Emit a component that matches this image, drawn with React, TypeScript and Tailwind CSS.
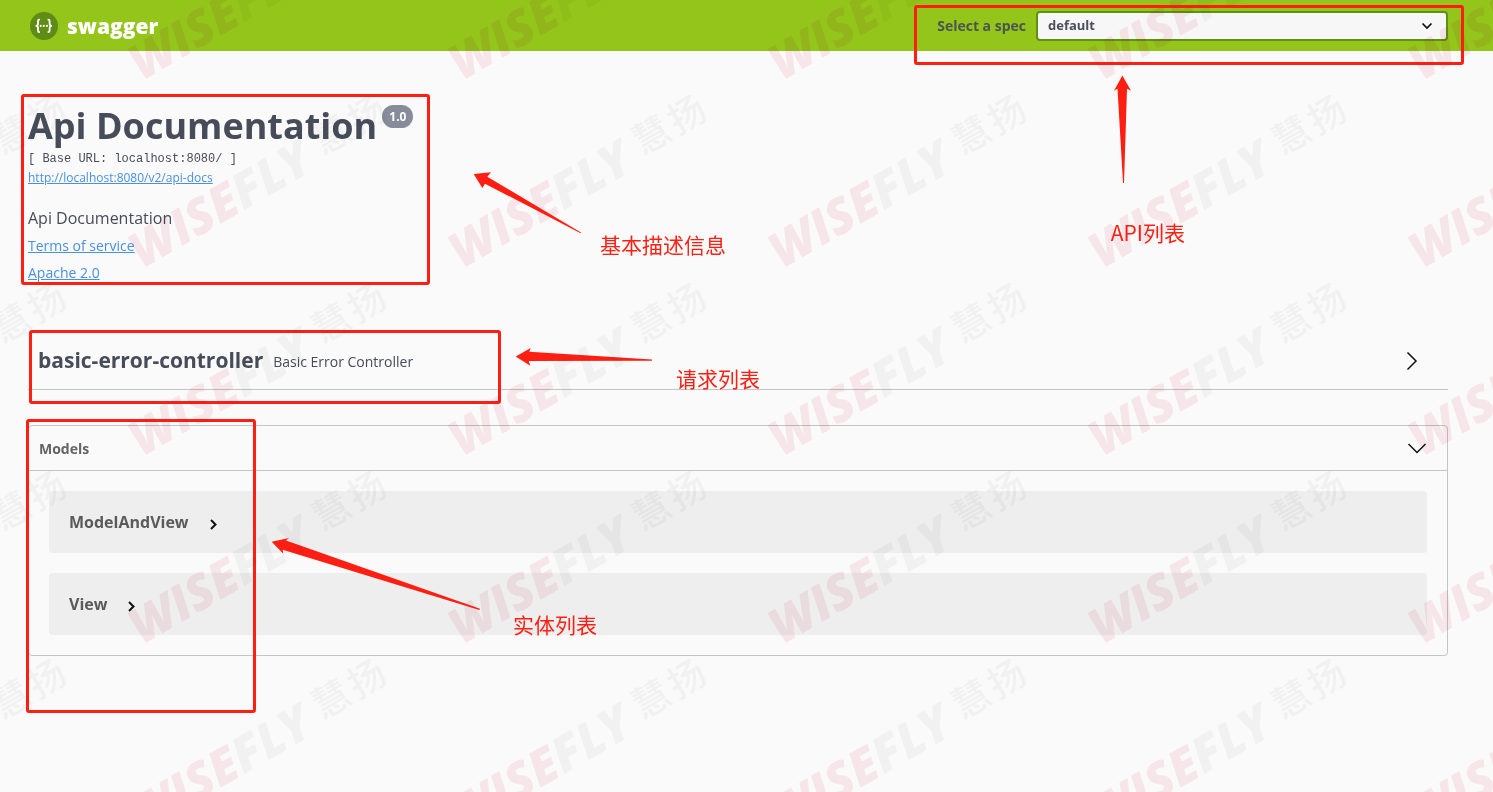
import React, { useState } from "react";

const HEADING = "font-['Open_Sans',sans-serif] font-bold";

function Chevron({ className, points, size, stroke }: { className?: string; points: string; size: number; stroke: number }) {
  return (
    <svg className={className} width={size} height={size} viewBox={`0 0 ${size} ${size}`} fill="none" stroke="#111" strokeWidth={stroke} aria-hidden="true">
      <polyline points={points} />
    </svg>
  );
}

function Logo() {
  return (
    <a href="#" className="flex items-center gap-[9px]">
      <svg width="29" height="29" viewBox="0 0 29 29" aria-hidden="true">
        <circle cx="15" cy="15" r="14" fill="#5f8c14" />
        <g fill="none" stroke="#fff" strokeWidth="1.8">
          <path d="M11 8.6H10.2Q9 8.6 9 9.9V12.7Q9 14.8 6.6 14.8Q9 14.8 9 16.9V19.8Q9 21.2 10.2 21.2H11" />
          <path d="M18.6 8.6H19.4Q20.6 8.6 20.6 9.9V12.7Q20.6 14.8 23 14.8Q20.6 14.8 20.6 16.9V19.8Q20.6 21.2 19.4 21.2H18.6" />
        </g>
        <g fill="#fff">
          <circle cx="11.7" cy="14.9" r="1.05" />
          <circle cx="14.8" cy="14.9" r="1.05" />
          <circle cx="17.9" cy="14.9" r="1.05" />
        </g>
      </svg>
      <span className="font-['Open_Sans',sans-serif] text-[21px] leading-7 font-extrabold text-white">swagger</span>
    </a>
  );
}

function TopBar() {
  return (
    <header className="flex h-[51px] items-center justify-between bg-[#93c51b] pr-[45px] pl-[29px]">
      <Logo />
      <div className="flex items-center gap-[10px]">
        <label htmlFor="spec" className={`${HEADING} text-sm text-[#4d5451]`}>
          Select a spec
        </label>
        <div className="relative">
          <select
            id="spec"
            className={`${HEADING} h-[30px] w-[412px] appearance-none rounded-[4px] border-2 border-[#628f16] bg-[#f7f7f7] px-[10px] text-[13px] text-[#4b4f5c]`}
          >
            <option>default</option>
          </select>
          <Chevron className="pointer-events-none absolute top-2 right-[14px]" size={14} stroke={1.7} points="2.5,4.5 7,9 11.5,4.5" />
        </div>
      </div>
    </header>
  );
}

function Info() {
  return (
    <section className="pt-[50px] text-[#474c5a]">
      <div className="flex items-start gap-[5px]">
        <h1 className="font-['Open_Sans',sans-serif] text-4xl leading-[49px] font-bold">Api Documentation</h1>
        <span className="mt-1 rounded-full bg-[#868c9a] px-[7px] text-xs leading-[23px] font-bold text-white">1.0</span>
      </div>
      <p className="font-['Liberation_Mono',monospace] text-xs leading-[18px]">[ Base URL: localhost:8080/ ]</p>
      <a href="#api-docs" className="block w-fit text-xs leading-5 text-[#4990e2] underline">
        http://localhost:8080/v2/api-docs
      </a>
      <p className="mt-[18px] text-base leading-6">Api Documentation</p>
      <a href="#terms" className="mt-0.5 block w-fit text-sm leading-[27px] text-[#4990e2] underline">
        Terms of service
      </a>
      <a href="#license" className="block w-fit text-sm leading-[27px] text-[#4990e2] underline">
        Apache 2.0
      </a>
    </section>
  );
}

function ControllerTag() {
  return (
    <section className="mt-[47px] flex h-[57px] items-center border-b border-[#c3c4c8] px-[10px] text-[#474c5a]">
      <h2 className={`${HEADING} text-[21px]`}>basic-error-controller</h2>
      <small className="ml-[10px] flex-1 pt-0.5 text-sm">Basic Error Controller</small>
      <button type="button" aria-label="Expand operations" className="mr-4">
        <Chevron size={20} stroke={1.5} points="5.5,1.5 14,10 5.5,18.5" />
      </button>
    </section>
  );
}

function Models() {
  const [open, setOpen] = useState(true);
  return (
    <section className="mt-[35px] rounded-[4px] border border-[#c3c4c8]">
      <h3 className="border-b border-[#c3c4c8]">
        <button
          type="button"
          onClick={() => setOpen(!open)}
          className={`${HEADING} flex h-11 w-full items-center justify-between pt-0.5 pr-5 pl-[10px] text-sm text-[#646468]`}
        >
          Models
          <Chevron size={20} stroke={1.5} points="1.5,5 10,13.5 18.5,5" />
        </button>
      </h3>
      {open && (
        <div className="flex flex-col gap-5 p-5">
          {["ModelAndView", "View"].map((name) => (
            <button key={name} type="button" className={`${HEADING} flex h-[62px] items-center gap-[18px] rounded-[4px] bg-[#eee] px-5 text-base text-[#5a5a5a]`}>
              {name}
              <Chevron className="mt-1" size={13} stroke={2} points="4,2 8.5,6.5 4,11" />
            </button>
          ))}
        </div>
      )}
    </section>
  );
}

function Box({ className }: { className: string }) {
  return <div className={`absolute rounded-[3px] border-3 border-[#ff1f12] ${className}`} />;
}

function Note({ className, children }: { className: string; children: React.ReactNode }) {
  return (
    <p className={`absolute font-['Noto_Sans_CJK_SC',sans-serif] text-[21px] leading-6 font-normal whitespace-nowrap text-[#ff1f12] ${className}`}>{children}</p>
  );
}

function Annotations() {
  return (
    <div className="pointer-events-none absolute inset-0">
      <Box className="top-[5px] right-[29px] h-[60px] w-[550px]" />
      <Box className="top-[94px] left-[21px] h-[191px] w-[409px]" />
      <Box className="top-[330px] left-[29px] h-[74px] w-[472px]" />
      <Box className="top-[419px] left-[26px] h-[294px] w-[230px]" />
      <svg className="absolute top-0 left-0" width="700" height="640" viewBox="0 0 700 640" fill="#ff1f12" aria-hidden="true">
        <polygon points="473.7,174 491,172.3 487.3,176.7 581,232.4 580.6,233.2 485,183.7 482.3,188" />
        <polygon points="515.7,356.4 530.7,348 529.3,351.7 652,359.6 652,360.7 528.7,361 530.3,365.7" />
        <polygon points="271.7,541.7 289,538 286,540.4 480,608.8 479.4,610 282.7,549.7 283.3,553.7" />
      </svg>
      <svg className="absolute top-[75px] right-[360px]" width="20" height="110" viewBox="0 0 20 110" fill="#ff1f12" aria-hidden="true">
        <polygon points="9.4,0.5 18,15.7 14,13.7 11,108 10,108 4.5,13.7 1,15.7" />
      </svg>
      <Note className="top-[220px] right-[308px]">API列表</Note>
      <Note className="top-[232px] left-[600px]">基本描述信息</Note>
      <Note className="top-[366px] left-[676px]">请求列表</Note>
      <Note className="top-[612px] left-[513px]">实体列表</Note>
    </div>
  );
}

function Watermark() {
  return (
    <div className="pointer-events-none absolute inset-0 overflow-hidden mix-blend-multiply" aria-hidden="true">
      <div className="absolute -top-[102px] -left-[222px] grid auto-rows-[188px] grid-cols-[repeat(6,320px)]">
        {Array.from({ length: 30 }, (_, i) => (
          <div key={i} className="flex items-center justify-center">
            <div className="flex -rotate-30 items-center whitespace-nowrap text-[#f6f6f6]">
              <span className="font-['Open_Sans',sans-serif] text-[49px] leading-none font-extrabold italic">
                <span className="text-[#fbebee]">WISE</span>FLY
              </span>
              <span className="ml-3 flex gap-1 pb-[10px] font-['Noto_Sans_CJK_SC',sans-serif] text-[37px] leading-none font-medium">
                <span>慧</span>
                <span>扬</span>
              </span>
            </div>
          </div>
        ))}
      </div>
    </div>
  );
}

export default function App() {
  return (
    <div className="relative min-h-screen overflow-hidden bg-[#fafafa] font-['Open_Sans',sans-serif]">
      <TopBar />
      <main className="pr-[45px] pb-16 pl-7">
        <Info />
        <ControllerTag />
        <Models />
      </main>
      <Annotations />
      <Watermark />
    </div>
  );
}
